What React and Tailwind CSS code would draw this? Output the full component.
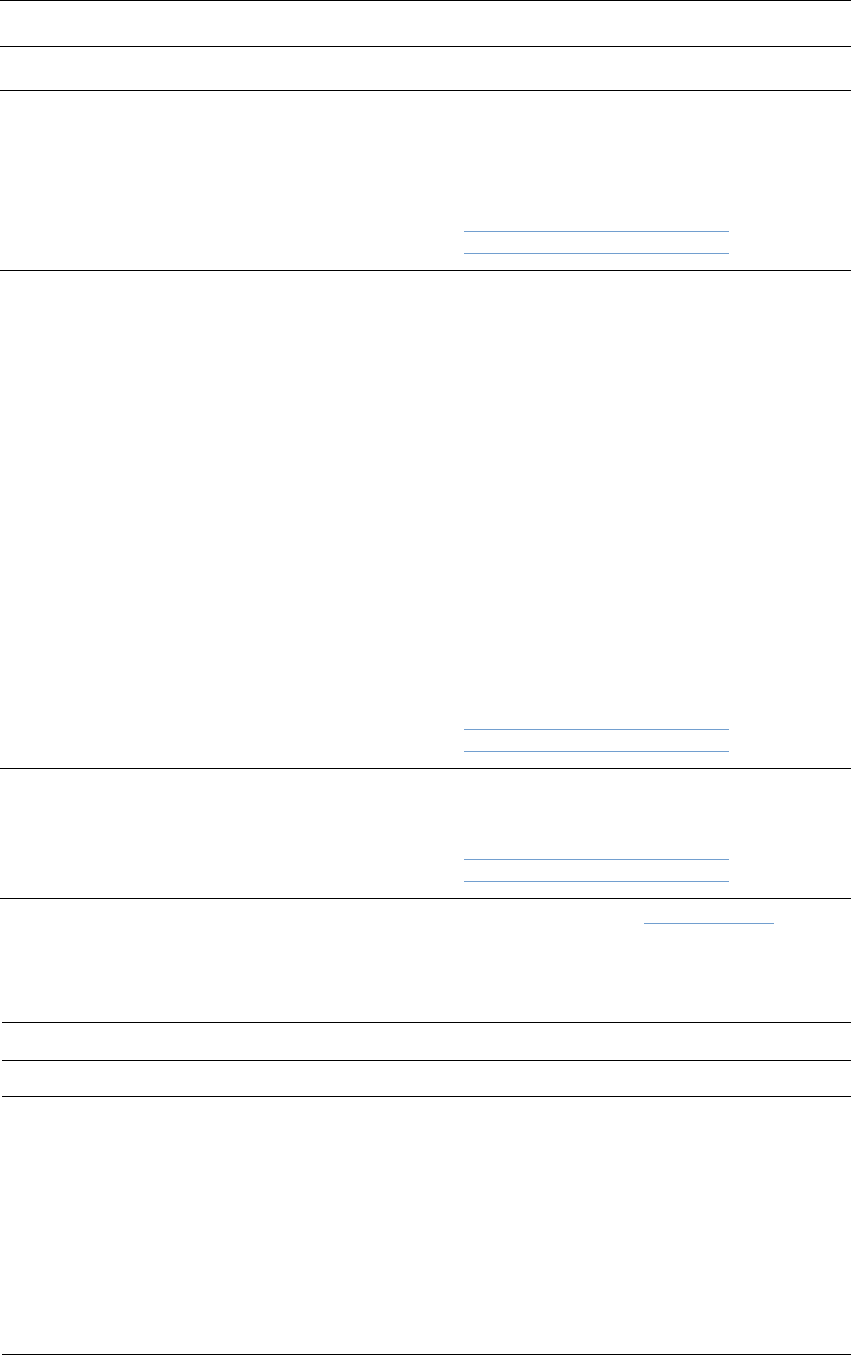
export default function App() {
  const Blue = ({ w = "w-[265px]", ml = "ml-[464px]" }) => (
    <div className={`h-px bg-[#729fcf] ${w} ${ml}`} />
  );
  return (
    <div className="w-[851px] bg-white font-['Liberation_Sans',sans-serif]">
      <div className="h-[46px] border-t border-black" />
      <div className="h-[44px] border-t border-black" />
      <div className="border-t border-black pt-[140px] pb-[16px]">
        <div className="h-px w-[265px] ml-[464px] bg-[#729fcf]" />
        <div className="h-px w-[265px] ml-[464px] mt-[21px] bg-[#729fcf]" />
      </div>
      <div className="border-t border-black pt-[458px] pb-[16px]">
        <div className="h-px w-[265px] ml-[464px] bg-[#729fcf]" />
        <div className="h-px w-[265px] ml-[464px] mt-[21px] bg-[#729fcf]" />
      </div>
      <div className="border-t border-black pt-[90px] pb-[16px]">
        <div className="h-px w-[265px] ml-[464px] bg-[#729fcf]" />
        <div className="h-px w-[265px] ml-[464px] mt-[21px] bg-[#729fcf]" />
      </div>
      <div className="border-t border-black pt-[24px] pb-[98px]">
        <div className="h-px w-[130px] ml-[644px] bg-[#729fcf]" />
      </div>
      <div className="ml-[2px]">
        <div className="h-[38px] border-t border-black" />
        <div className="h-[36px] border-t border-black" />
        <div className="h-[258px] border-t border-black" />
        <div className="border-t border-black" />
      </div>
    </div>
  );
}
